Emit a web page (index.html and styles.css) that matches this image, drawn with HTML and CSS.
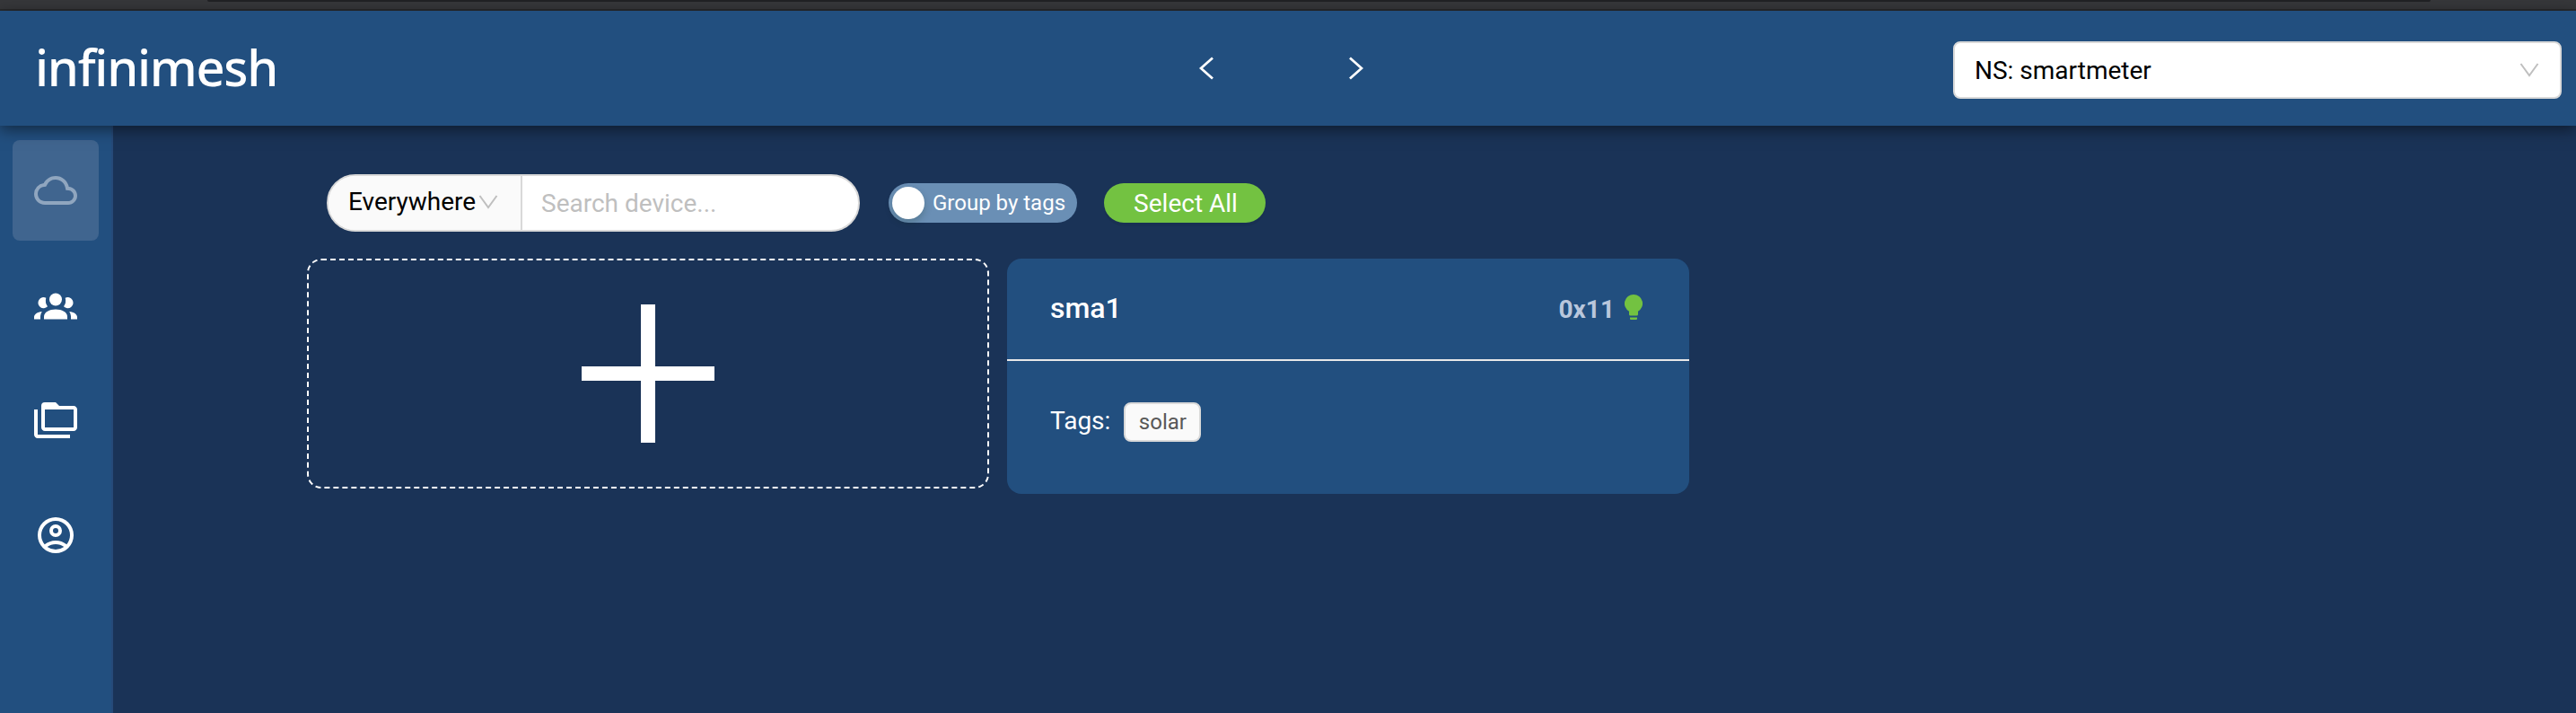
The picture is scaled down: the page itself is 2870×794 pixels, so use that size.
FILE: index.html
```html
<!DOCTYPE html>
<html lang="en">
<head>
<meta charset="utf-8">
<title>infinimesh</title>
<link rel="stylesheet" href="styles.css">
</head>
<body>
<div class="chrome"><div class="omnibox"></div></div>
<header class="header">
  <div class="logo">infinimesh</div>
  <nav class="history">
    <svg width="16" height="26" viewBox="0 0 16 26"><path d="M15 1.500 2 13l13 11.500"/></svg>
    <svg width="16" height="26" viewBox="0 0 16 26"><path d="M1 1.500 14 13 1 24.500"/></svg>
  </nav>
  <div class="namespace"><span>NS: smartmeter</span>
    <svg class="caret" width="22" height="16" viewBox="0 0 22 16"><path d="M1.500 1 11 14 20.500 1"/></svg>
  </div>
</header>
<div class="layout">
  <aside class="sidebar">
    <a class="item active"><svg width="48" height="48" viewBox="0 0 24 24"><path d="M19.350 10.040A7.490 7.490 0 0 0 12 4C9.110 4 6.600 5.640 5.350 8.040A5.994 5.994 0 0 0 0 14c0 3.310 2.690 6 6 6h13c2.760 0 5-2.240 5-5 0-2.640-2.050-4.780-4.650-4.960zM19 18H6c-2.210 0-4-1.790-4-4 0-2.050 1.530-3.760 3.560-3.970l1.070-.110.500-.950A5.469 5.469 0 0 1 12 6c2.620 0 4.880 1.860 5.390 4.430l.300 1.500 1.530.110A2.980 2.980 0 0 1 22 15c0 1.650-1.350 3-3 3z"/></svg></a>
    <a class="item"><svg width="48" height="48" viewBox="0 0 24 24"><circle cx="12" cy="8.750" r="3.500"/><path d="M5.500 19.750v-1.600c0-2.300 3-3.900 6.500-3.900s6.500 1.600 6.500 3.900v1.600z"/><path d="M6.650 7.850A3.050 3.050 0 1 0 7.500 12.650 5.600 5.600 0 0 1 6.650 7.850zM17.350 7.850A3.050 3.050 0 1 1 16.500 12.650 5.600 5.600 0 0 0 17.350 7.850zM0 19.750v-1.300c0-1.500 1.800-2.700 4.400-3a4.200 4.200 0 0 0-.900 2.600v1.700zM24 19.750v-1.300c0-1.500-1.800-2.700-4.400-3a4.200 4.200 0 0 1 .900 2.600v1.700z"/></svg></a>
    <a class="item"><svg width="48" height="48" viewBox="0 0 24 24"><path fill-rule="evenodd" d="M2 6H0v14c0 1.100.900 2 2 2h18v-2H2zM22 4h-8l-2-2H6a2 2 0 0 0-2 2v12c0 1.100.900 2 2 2h16c1.100 0 2-.900 2-2V6c0-1.100-.900-2-2-2zm0 12H6V6h16z"/></svg></a>
    <a class="item"><svg width="48" height="48" viewBox="0 0 24 24"><path fill-rule="evenodd" d="M12 2a10 10 0 1 0 0 20 10 10 0 0 0 0-20zM7.350 18.500C8.660 17.560 10.260 17 12 17s3.340.560 4.650 1.500A7.960 7.960 0 0 1 12 20a7.960 7.960 0 0 1-4.650-1.500zm10.790-1.380A9.950 9.950 0 0 0 12 15c-2.320 0-4.450.800-6.140 2.120A7.957 7.957 0 0 1 4 12a8 8 0 0 1 16 0c0 1.950-.700 3.730-1.860 5.120zM12 6a3.500 3.500 0 1 0 0 7 3.500 3.500 0 0 0 0-7zm0 5a1.500 1.500 0 1 1 0-3 1.500 1.500 0 0 1 0 3z"/></svg></a>
  </aside>
  <main class="main">
    <div class="toolbar">
      <div class="search">
        <div class="scope">Everywhere<svg class="caret" width="22" height="16" viewBox="0 0 22 16"><path d="M1.500 1 11 14 20.500 1"/></svg></div>
        <div class="placeholder">Search device...</div>
      </div>
      <div class="switch"><span class="knob"></span>Group by tags</div>
      <div class="select-all">Select All</div>
    </div>
    <div class="cards">
      <div class="add"><svg width="148" height="156" viewBox="0 0 148 156"><path d="M66 1h16v69h66v16H82v69H66V86H0V70h66z"/></svg></div>
      <div class="card">
        <div class="card-head">
          <span class="name">sma1</span>
          <span class="id">0x11</span>
          <svg class="bulb" width="20" height="28" viewBox="0 0 20 28"><path d="M10 0a10 10 0 0 0-5 18.700V22q0 1.500 1.500 1.500h7q1.500 0 1.500-1.500v-3.300A10 10 0 0 0 10 0zM6 25.500h8v1.500q0 1-1 1H7q-1 0-1-1z"/></svg>
        </div>
        <div class="card-body"><span class="label">Tags:</span><span class="tag">solar</span></div>
      </div>
    </div>
  </main>
</div>
</body>
</html>
```

FILE: styles.css
```css
* { box-sizing: border-box; }
body { margin: 0; height: 794px; overflow: hidden; display: flex; flex-direction: column; background: #1a3357; font-family: Roboto, sans-serif; font-size: 28px; color: #fff; }
svg { display: block; flex: none; }
.chrome { height: 12px; flex: none; background: #36373a; border-bottom: 2px solid #292a2c; padding: 0 162px 0 231px; }
.omnibox { height: 2px; background: #202124; border-radius: 0 0 8px 8px; }
.header { position: relative; z-index: 1; height: 128px; flex: none; background: #224f7f; display: grid; grid-template-columns: 1336px 840px 678px; box-shadow: 0 4px 16px rgba(0,0,0,.5); }
.logo { padding-left: 39px; font: 500 56px/124px "Noto Sans", sans-serif; letter-spacing: -1.300px; white-space: nowrap; font-variant-ligatures: none; }
.history { display: flex; gap: 151px; padding-top: 51px; }
.history path { fill: none; stroke: #fff; stroke-width: 2.800; }
.namespace { margin-top: 34px; height: 64px; border: 2px solid #d9d9d9; border-radius: 8px; background: #fff; color: #000; display: flex; align-items: center; justify-content: space-between; padding: 0 23px 0 22px; }
.caret path { fill: none; stroke: #bfbfbf; stroke-width: 2; }
.layout { flex: 1; display: flex; }
.sidebar { width: 126px; background: #224f7f; border-right: 2px solid #264a79; padding: 16px 14px; display: flex; flex-direction: column; gap: 16px; }
.item { width: 96px; height: 112px; border-radius: 8px; display: flex; align-items: center; justify-content: center; }
.item svg { fill: #fff; }
.active { background: #40658f; }
.active svg { fill: #90a6bf; }
.main { padding: 54px 0 0 216px; }
.toolbar { display: flex; align-items: center; padding-left: 22px; height: 64px; }
.search { width: 594px; height: 64px; border: 2px solid #d9d9d9; border-radius: 32px; overflow: hidden; display: flex; background: #fff; line-height: 60px; }
.scope { width: 216px; background: #fafafa; color: #000; border-right: 2px solid #d9d9d9; padding: 0 0 2px 22px; display: flex; align-items: center; height: 60px; line-height: 58px; }
.scope .caret { margin-left: 3px; }
.placeholder { padding: 1px 0 0 21px; color: #bfbfbf; }
.switch { margin-left: 32px; width: 210px; height: 44px; border-radius: 22px; background: #6a8fb5; padding-left: 4px; display: flex; align-items: center; font-size: 24px; }
.knob { width: 36px; height: 36px; border-radius: 50%; background: #fff; margin-right: 9px; box-shadow: 0 4px 8px rgba(0,35,11,.2); }
.select-all { margin-left: 30px; width: 180px; height: 44px; border-radius: 22px; background: #73c241; text-align: center; line-height: 46px; padding-left: 2px; box-shadow: 0 4px 0 rgba(0,0,0,.045); }
.cards { display: flex; align-items: flex-start; gap: 20px; margin-top: 30px; }
.add { width: 760px; height: 256px; border: 2px dashed #fff; border-radius: 16px; display: flex; align-items: center; justify-content: center; }
.add path { fill: #fff; }
.card { width: 760px; height: 262px; border-radius: 16px; background: #224f7f; }
.card-head { height: 114px; border-bottom: 2px solid #e8e8e8; padding: 0 52px 0 48px; display: flex; align-items: center; }
.name { flex: 1; font-size: 32px; font-weight: 500; padding-bottom: 2px; }
.id { font-weight: 700; color: #b9c7dc; margin-right: 11px; }
.bulb { fill: #73c241; margin-bottom: 4px; }
.card-body { padding: 46px 48px; display: flex; align-items: center; }
.label { padding-bottom: 3px; }
.tag { margin-left: 15px; height: 44px; line-height: 41px; padding: 0 14.500px; border: 2px solid #d9d9d9; border-radius: 8px; background: #fafafa; color: #595959; font-size: 24px; }
```
